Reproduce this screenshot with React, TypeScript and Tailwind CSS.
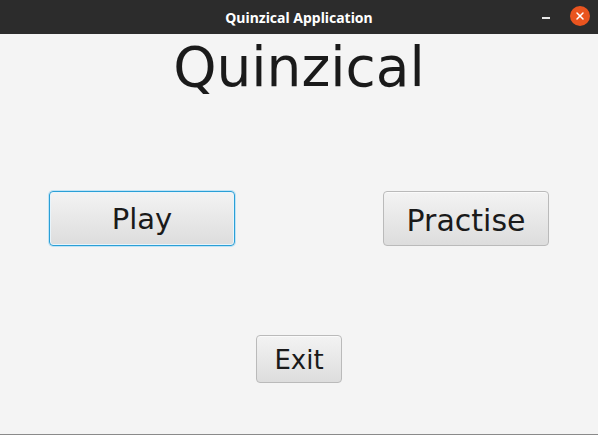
import { X } from 'lucide-react';

const FxButton = ({ text, focused, className }: { text: string; focused?: boolean; className: string }) => (
    <button
        className={`${className} pt-[3px] rounded-[4px] border bg-gradient-to-b from-[#f3f3f3] to-[#dddddd] text-[#1a1a1a] ${
            focused
                ? 'border-[#2a9fd6] shadow-[0_0_0_1px_#bfe3f5,inset_0_0_0_1px_#e8f4fb]'
                : 'border-[#bababa] shadow-[inset_0_1px_0_#fafafa]'
        }`}
        style={{ fontFamily: '"DejaVu Sans", sans-serif' }}
    >
        {text}
    </button>
);

const App = () => {
    return (
        <div className="w-[598px] h-[435px] flex flex-col bg-[#f4f4f4] overflow-hidden">
            <header className="h-[34px] bg-[#2c2c2c] flex items-center relative">
                <span
                    className="w-full text-center text-white font-bold text-[14px]"
                    style={{ fontFamily: '"Noto Sans", "DejaVu Sans", sans-serif' }}
                >
                    Quinzical Application
                </span>
                <span className="absolute left-[542px] top-[17px] w-[8px] h-[1.5px] bg-[#e8e8e8]" />
                <span className="absolute left-[570px] top-[6px] w-[20px] h-[20px] rounded-full bg-[#e9541f] flex items-center justify-center">
                    <X size={12} strokeWidth={3} color="#ffffff" />
                </span>
            </header>

            <main className="h-[400px] flex flex-col items-center">
                <h1
                    className="mt-[6px] text-[55px] leading-none text-[#1a1a1a]"
                    style={{ fontFamily: '"DejaVu Sans", sans-serif' }}
                >
                    Quinzical
                </h1>

                <div className="mt-[96px] w-full px-[49px] flex justify-between">
                    <FxButton text="Play" focused className="w-[186px] h-[55px] text-[29px]" />
                    <FxButton text="Practise" className="w-[166px] h-[55px] text-[30px]" />
                </div>

                <FxButton text="Exit" className="mt-[89px] w-[86px] h-[48px] text-[26px]" />
            </main>

            <div className="h-[1px] bg-[#8a8a8a]" />
        </div>
    );
};

export default App;
